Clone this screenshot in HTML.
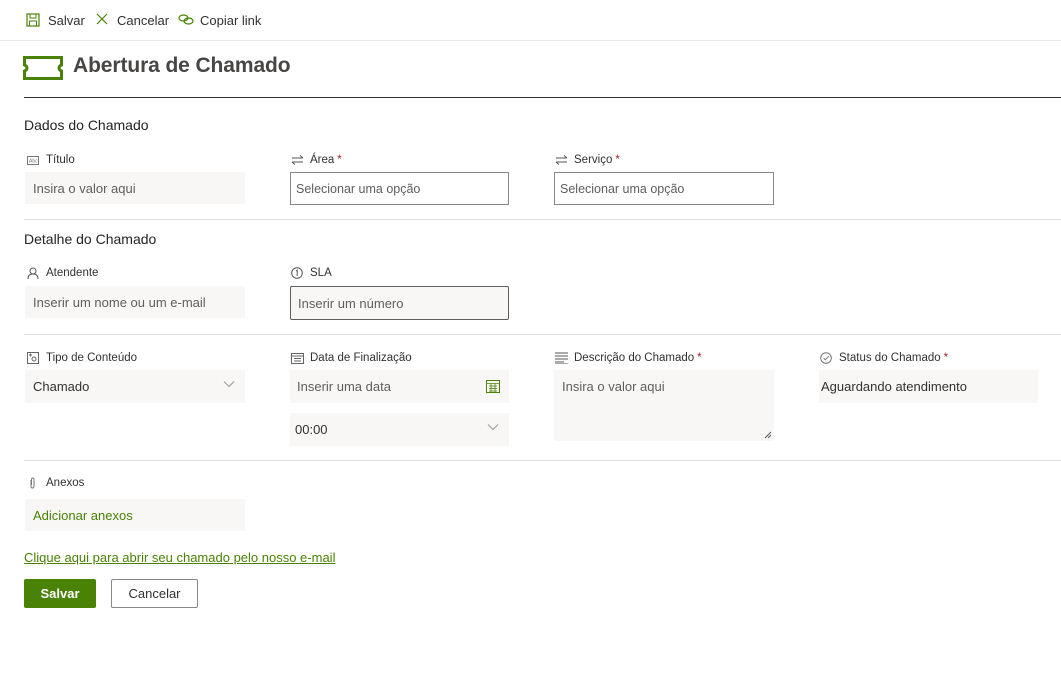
<!DOCTYPE html>
<html><head><meta charset="utf-8"><style>
*{margin:0;padding:0;box-sizing:border-box}
body{width:1061px;height:688px;background:#fff;font-family:"Liberation Sans",sans-serif;color:#323130;position:relative;overflow:hidden}
.a{position:absolute}
.tb{font-size:13px;color:#323130;top:13px}
.hr{position:absolute;left:24px;right:0;height:1px;background:#e1dfdd}
.h{position:absolute;left:24px;font-size:14px;color:#252423}
.lb{position:absolute;font-size:11.5px;color:#323130;display:flex;align-items:center;gap:6px;white-space:nowrap}
.lb svg{flex:none}
.req{color:#a4262c;margin-left:3px}
.f{position:absolute;background:#f8f7f5;border-radius:2px;font-size:13px;color:#605e5c;padding-left:8px;display:flex;align-items:center;width:220px;height:33px}
.bx{background:#fff;border:1px solid #8a8886;border-radius:0;padding-left:5px;font-size:12.5px}
.dd{position:absolute;right:10px;top:10px}
</style></head><body>
<!-- toolbar -->
<svg class="a" style="left:26px;top:13px" width="14" height="14" viewBox="0 0 14 14"><rect x="1" y="1" width="12" height="12" fill="none" stroke="#498205" stroke-width="1.2"/><rect x="4" y="1" width="6" height="4" fill="none" stroke="#498205"/><rect x="3.5" y="8" width="7" height="5" fill="none" stroke="#498205"/></svg>
<div class="a tb" style="left:48px">Salvar</div>
<svg class="a" style="left:96px;top:13px" width="12" height="12" viewBox="0 0 12 12"><path d="M1 1L11 11M11 1L1 11" stroke="#498205" stroke-width="1.2"/></svg>
<div class="a tb" style="left:117px">Cancelar</div>
<svg class="a" style="left:178px;top:14px" width="16" height="11" viewBox="0 0 16 11"><ellipse cx="5.5" cy="4" rx="4.5" ry="3" fill="none" stroke="#498205" stroke-width="1.2"/><ellipse cx="10.5" cy="7" rx="4.5" ry="3" fill="none" stroke="#498205" stroke-width="1.2"/></svg>
<div class="a tb" style="left:200px">Copiar link</div>
<div class="a" style="left:0;right:0;top:40px;height:1px;background:#edebe9"></div>
<!-- title -->
<svg class="a" style="left:23px;top:56px" width="40" height="24" viewBox="0 0 40 24"><path d="M1.5 1.5H38.5V9Q36 10 36 12Q36 14 38.5 15V22.5H1.5V15Q4 14 4 12Q4 10 1.5 9Z" fill="none" stroke="#498205" stroke-width="3"/></svg>
<div class="a" style="left:73px;top:54px;font-size:21px;font-weight:bold;color:#484644;letter-spacing:-0.1px">Abertura de Chamado</div>
<div class="a" style="left:24px;right:0;top:97px;height:1px;background:#323130"></div>

<div class="h" style="top:117px">Dados do Chamado</div>
<div class="lb" style="left:27px;top:154px"><svg width="12" height="9" viewBox="0 0 12 9"><rect x=".5" y=".5" width="11" height="8" fill="none" stroke="#777"/><text x="2" y="6.5" font-size="5" fill="#777" font-family="Liberation Sans">Abc</text></svg><span style="margin-left:1px">Título</span></div>
<div class="f" style="left:25px;top:172px;height:32px">Insira o valor aqui</div>
<div class="lb" style="left:291px;top:154px"><svg width="13" height="10" viewBox="0 0 13 10"><path d="M1 3H12M9 0.5L12 3M12 7H1M4 9.5L1 7" stroke="#555" fill="none"/></svg><span>Área<span class="req">*</span></span></div>
<div class="f bx" style="left:290px;top:172px;width:219px;height:33px">Selecionar uma opção</div>
<div class="lb" style="left:555px;top:154px"><svg width="13" height="10" viewBox="0 0 13 10"><path d="M1 3H12M9 0.5L12 3M12 7H1M4 9.5L1 7" stroke="#555" fill="none"/></svg><span>Serviço<span class="req">*</span></span></div>
<div class="f bx" style="left:554px;top:172px;width:220px;height:33px">Selecionar uma opção</div>
<div class="hr" style="top:219px"></div>

<div class="h" style="top:231px">Detalhe do Chamado</div>
<div class="lb" style="left:27px;top:267px"><svg width="12" height="12" viewBox="0 0 12 12"><circle cx="6" cy="4" r="3" fill="none" stroke="#555"/><path d="M1 12Q1 7 6 7Q11 7 11 12" fill="none" stroke="#555"/></svg><span style="margin-left:1px">Atendente</span></div>
<div class="f" style="left:25px;top:286px;height:32px">Inserir um nome ou um e-mail</div>
<div class="lb" style="left:291px;top:267px"><svg width="12" height="12" viewBox="0 0 12 12"><circle cx="6" cy="6" r="5.3" fill="none" stroke="#555"/><path d="M5 4L6.2 3.2V9" fill="none" stroke="#555"/></svg><span style="margin-left:1px">SLA</span></div>
<div class="f" style="left:290px;top:286px;width:219px;height:34px;border:1px solid #605e5c;padding-left:7px">Inserir um número</div>
<div class="hr" style="top:334px"></div>

<div class="lb" style="left:27px;top:352px"><svg width="12" height="12" viewBox="0 0 12 12"><rect x=".5" y=".5" width="11" height="11" fill="none" stroke="#666"/><circle cx="7" cy="7" r="2" fill="none" stroke="#666"/><path d="M2 3H5M3.5 1.5V4.5" stroke="#666"/></svg><span style="margin-left:1px">Tipo de Conteúdo</span></div>
<div class="f" style="left:25px;top:370px;height:33px;color:#323130">Chamado<svg class="dd" width="12" height="8" viewBox="0 0 12 8"><path d="M1 1.5L6 6.5L11 1.5" fill="none" stroke="#999"/></svg></div>
<div class="lb" style="left:291px;top:352px"><svg width="13" height="12" viewBox="0 0 13 12"><rect x=".5" y="1.5" width="12" height="10" fill="none" stroke="#666"/><path d="M.5 4H12.5M3 6.5H10M3 9H10" stroke="#666"/></svg>Data de Finalização</div>
<div class="f" style="left:290px;top:370px;width:219px;height:33px;padding-left:7px">Inserir uma data<svg class="dd" style="top:9px;right:9px" width="14" height="14" viewBox="0 0 14 14"><rect x=".5" y="1.5" width="13" height="12" fill="none" stroke="#498205"/><path d="M.5 4.5H13.5M3 7H11M3 9.5H11M3 12H11M5 4.5V13.5M9 4.5V13.5" stroke="#498205" stroke-width=".8"/></svg></div>
<div class="f" style="left:290px;top:413px;width:219px;height:33px;padding-left:5px;color:#323130">00:00<svg class="dd" width="12" height="8" viewBox="0 0 12 8"><path d="M1 1.5L6 6.5L11 1.5" fill="none" stroke="#999"/></svg></div>
<div class="lb" style="left:555px;top:352px"><svg width="13" height="12" viewBox="0 0 13 12"><path d="M0 1H13M0 4H13M0 7H13M0 10H9M0 12H13" stroke="#555"/></svg><span>Descrição do Chamado<span class="req">*</span></span></div>
<div class="f" style="left:554px;top:370px;width:220px;height:71px;align-items:flex-start;padding-top:9px">Insira o valor aqui<svg class="a" style="right:2px;bottom:2px" width="8" height="8" viewBox="0 0 8 8"><path d="M1 7L7 1M4 7L7 4" stroke="#555"/></svg></div>
<div class="lb" style="left:820px;top:352px"><svg width="12" height="12" viewBox="0 0 12 12"><circle cx="6" cy="6" r="5.3" fill="none" stroke="#777"/><path d="M3.5 6L5.3 7.8L8.7 4.2" fill="none" stroke="#777"/></svg><span style="margin-left:1px">Status do Chamado<span class="req">*</span></span></div>
<div class="f" style="left:819px;top:370px;width:219px;height:33px;padding-left:2px;color:#323130">Aguardando atendimento</div>
<div class="hr" style="top:460px"></div>

<div class="lb" style="left:29px;top:477px"><svg width="7" height="12" viewBox="0 0 7 12"><path d="M2 3V9Q2 11 3.5 11Q5 11 5 9V2.5Q5 1 3.8 1Q2.5 1 2.5 2.5V8" fill="none" stroke="#777"/></svg><span style="margin-left:4px">Anexos</span></div>
<div class="f" style="left:25px;top:499px;height:32px;color:#498205">Adicionar anexos</div>

<div class="a" style="left:24px;top:550px;font-size:13px;color:#498205;text-decoration:underline">Clique aqui para abrir seu chamado pelo nosso e-mail</div>
<div class="a" style="left:24px;top:579px;width:72px;height:29px;background:#498205;border-radius:2px;color:#fff;font-size:13px;font-weight:bold;display:flex;align-items:center;justify-content:center">Salvar</div>
<div class="a" style="left:111px;top:579px;width:87px;height:29px;border:1px solid #8a8886;border-radius:2px;color:#323130;font-size:13px;display:flex;align-items:center;justify-content:center">Cancelar</div>
</body></html>
